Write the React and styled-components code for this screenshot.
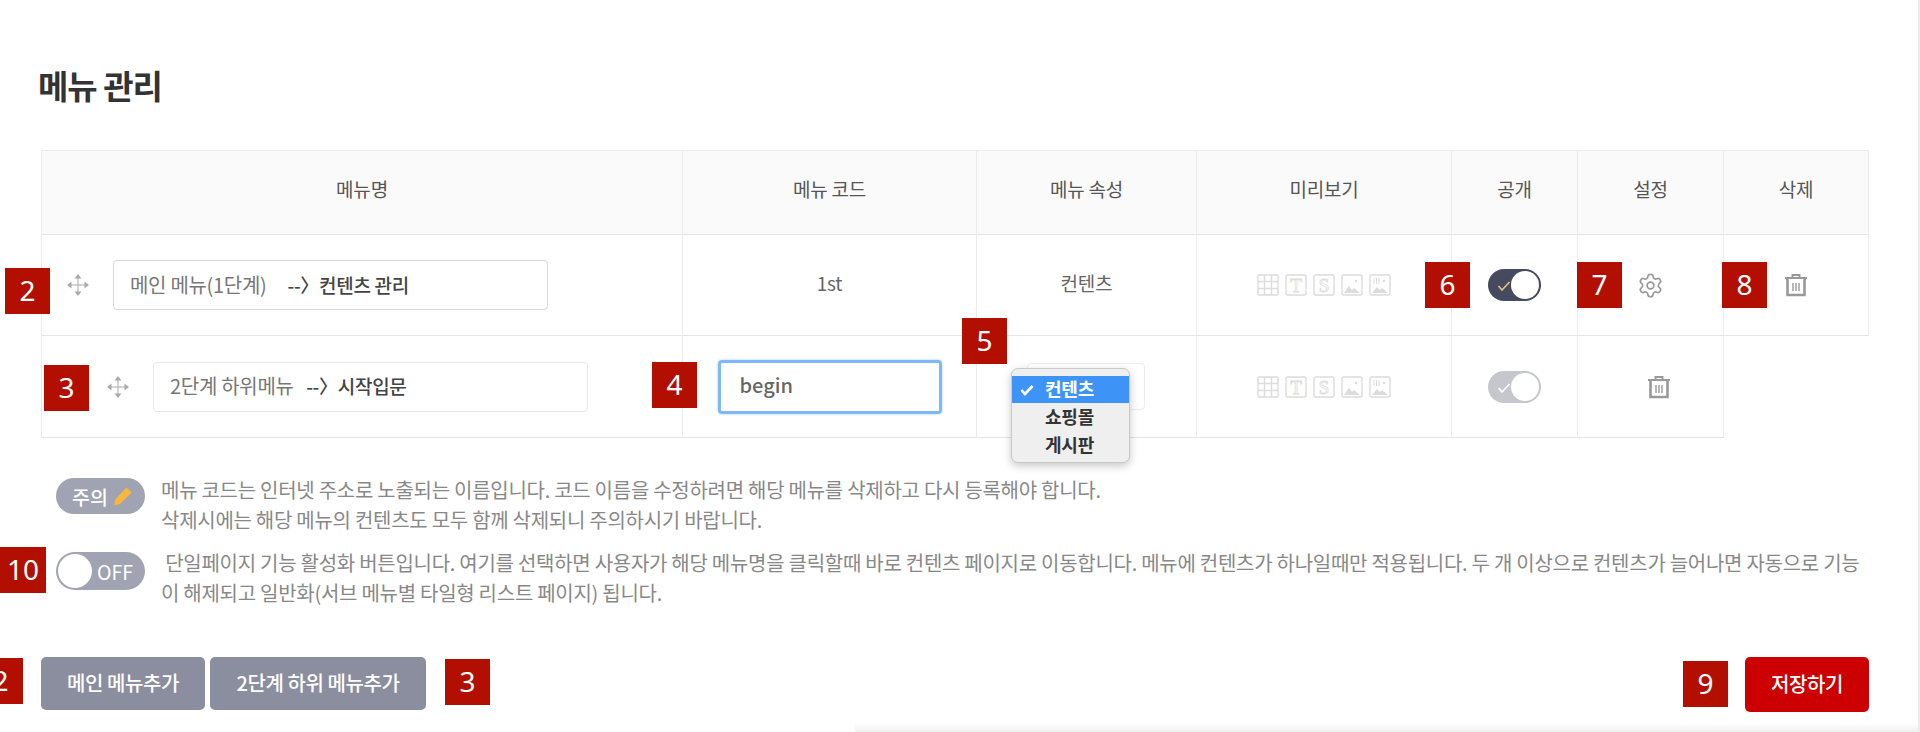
import React from 'react'
import styled, { createGlobalStyle } from 'styled-components'
import { Settings } from 'lucide-react'

const COLUMNS = '641px 294px 220px 255px 126px 146px 145px'

const GlobalStyle = createGlobalStyle`
html, body {
    margin: 0;
    padding: 0;
    overflow: hidden;
    background: #fff;
}
* { box-sizing: border-box; }
body {
    font-family: "Noto Sans CJK KR", "Noto Sans", sans-serif;
    color: #555;
}
`

const Page = styled.div`
position: relative;
width: 1920px;
height: 732px;
overflow: hidden;
padding: 0 49px 0 41px;
border-right: 2px solid #ececec;
`

const Title = styled.h1`
margin: 0 0 42px -3px;
padding-top: 62px;
font-size: 33px;
line-height: 46px;
font-weight: 700;
letter-spacing: -1px;
color: #333;
`

const Row = styled.div`
display: grid;
grid-template-columns: ${COLUMNS};
height: ${p => p.$h}px;
width: max-content;
border-left: 1px solid #ececec;
${p => p.$head && 'border-top: 1px solid #ececec;'}
`

const Cell = styled.div`
position: relative;
display: flex;
align-items: center;
justify-content: ${p => p.$start ? 'flex-start' : 'center'};
padding-left: ${p => p.$pl || 0}px;
padding-bottom: ${p => p.$head ? 8 : p.$text ? 5 : 0}px;
gap: 23px;
border-right: 1px solid #ececec;
border-bottom: 1px solid #e4e4e4;
font-size: 19px;
letter-spacing: -0.2px;
color: ${p => p.$head ? '#555' : '#666'};
background: ${p => p.$head ? '#fafafa' : '#fff'};
`

const Badge = styled.span`
position: absolute;
z-index: 3;
left: ${p => p.$x}px;
top: ${p => p.$y}px;
width: ${p => p.$w || 45}px;
height: 46px;
display: flex;
align-items: center;
justify-content: center;
padding-bottom: 3px;
background: #b30f00;
color: #fff;
font-family: "Noto Sans", sans-serif;
font-size: 28px;
letter-spacing: 0;
`

const NameField = styled.div`
width: 435px;
height: 50px;
display: flex;
align-items: center;
padding: 0 0 2px 16px;
background: #fff;
border: ${p => p.$light ? '1px solid #e8e8e8' : '1.5px solid #d8d8d8'};
border-radius: 4px;
font-size: 20px;
letter-spacing: -0.3px;
color: #777;
white-space: pre;
& b {
    font-weight: 500;
    color: #444;
    font-size: 19px;
}
`

const CodeInput = styled.div`
width: 224px;
height: 54px;
display: flex;
align-items: center;
padding: 0 0 4px 19px;
border: 3px solid #7db8f8;
border-radius: 4px;
box-shadow: 0 0 3px #a9d0fb;
font-size: 20px;
letter-spacing: 0;
font-weight: 500;
color: #666;
`

const SelectBox = styled.div`
width: 118px;
height: 47px;
margin-left: 50px;
border: 1px solid #ededed;
border-radius: 4px;
`

const SelectMenu = styled.ul`
position: absolute;
z-index: 2;
left: 34px;
top: 32px;
width: 119px;
height: 95px;
margin: 0;
padding: 7px 0 0;
list-style: none;
background: #efefef;
border: 1px solid #c9c9c9;
border-radius: 7px;
box-shadow: 0 3px 8px rgba(0, 0, 0, 0.22);
`

const SelectItem = styled.li`
position: relative;
height: ${p => p.$on ? 27 : 28}px;
display: flex;
align-items: center;
padding: 0 0 3px 33px;
font-size: 18px;
font-weight: 700;
color: ${p => p.$on ? '#fff' : '#333'};
background: ${p => p.$on ? '#3d94f6' : 'transparent'};
& svg {
    position: absolute;
    left: 8px;
    top: 7px;
}
`

const IconRow = styled.div`
display: flex;
gap: 6px;
`

const Track = styled.div`
position: relative;
width: 53px;
height: 32px;
border-radius: 16px;
background: ${p => p.$dim ? '#c5c7cc' : '#454a5e'};
& svg {
    position: absolute;
    left: 9px;
    top: 10px;
}
`

const Knob = styled.span`
position: absolute;
right: 2px;
top: 2px;
width: 28px;
height: 28px;
border-radius: 50%;
background: #fff;
`

const Note = styled.div`
position: relative;
display: flex;
gap: 16px;
margin-left: 15px;
margin-top: ${p => p.$mt}px;
`

const Pill = styled.div`
flex: none;
width: 89px;
height: ${p => p.$h}px;
margin-top: ${p => p.$mt}px;
display: flex;
align-items: center;
gap: 5px;
padding-left: ${p => p.$pl}px;
border-radius: 19px;
background: #a0a3b1;
color: #fff;
font-size: 19.5px;
font-weight: ${p => p.$weight || 500};
`

const OffKnob = styled.span`
flex: none;
width: 34px;
height: 34px;
border-radius: 50%;
background: #fff;
`

const NoteText = styled.p`
margin: 0;
font-size: 20px;
line-height: 30px;
letter-spacing: -0.27px;
color: #888;
white-space: pre;
`

const Footer = styled.div`
position: relative;
display: flex;
justify-content: space-between;
align-items: flex-start;
margin-top: 49px;
`

const ButtonGroup = styled.div`
display: flex;
gap: 5px;
`

const Button = styled.button`
width: ${p => p.$w}px;
height: ${p => p.$save ? 55 : 53}px;
padding: 0 0 3px;
border: 0;
border-radius: 5px;
font-family: inherit;
font-size: 20px;
font-weight: 500;
letter-spacing: -0.4px;
color: #fff;
background: ${p => p.$save ? '#cc0000' : '#8b8e9e'};
`

const BottomShade = styled.div`
position: absolute;
left: 855px;
right: 0;
bottom: 0;
height: 9px;
background: linear-gradient(to bottom, rgba(240, 240, 240, 0), #f0f0f0);
`

function MoveIcon() {
    return (
        <svg width="24" height="24" viewBox="0 0 24 24" fill="#aaa" stroke="none">
            <rect x="11.5" y="3" width="1" height="18" />
            <rect x="3" y="11.5" width="18" height="1" />
            <path d="M12 1l3.5 4.5h-7zM12 23l-3.5-4.5h7zM1 12l4.5-3.5v7zM23 12l-4.5 3.5v-7z" />
        </svg>
    )
}

function TrashIcon() {
    return (
        <svg width="24" height="24" viewBox="0 0 24 24" fill="none" stroke="#999" strokeWidth="2">
            <path d="M1 5h22M8.5 5V2h7v3" />
            <path d="M3.5 5v17h17V5" strokeWidth="2.6" />
            <path d="M9 10v8M12 10v8M15 10v8" strokeWidth="1.4" />
        </svg>
    )
}

function CheckMark({ color, weight = 1.6 }) {
    return (
        <svg width="14" height="14" viewBox="0 0 14 14" fill="none" stroke={color} strokeWidth={weight}>
            <path d="M1.5 7l3.5 4 7.5-8" />
        </svg>
    )
}

function PencilIcon() {
    return (
        <svg width="20" height="20" viewBox="0 0 20 20" fill="#f6b73c">
            <path d="M13.5 1.5l5 5L7 18l-6 1.5L2.5 13z" />
        </svg>
    )
}

const STROKE = '#dcdcdc'

function PreviewIcons() {
    const frame = <rect x="1" y="1" width="20" height="20" rx="1.5" fill="none" stroke={STROKE} strokeWidth="1.4" />
    const letter = (ch) => (
        <text x="11" y="17.5" textAnchor="middle" fontFamily="Liberation Serif, serif" fontSize="19" fill="none" stroke={STROKE} strokeWidth="0.8">{ch}</text>
    )
    return (
        <IconRow>
            <svg width="22" height="22" viewBox="0 0 22 22" fill="none" stroke={STROKE} strokeWidth="1.4">
                <rect x="1" y="1" width="20" height="20" rx="1" />
                <path d="M7.5 1v20M14.5 1v20M1 7.5h20M1 14.5h20" />
            </svg>
            <svg width="22" height="22" viewBox="0 0 22 22">{frame}{letter('T')}</svg>
            <svg width="22" height="22" viewBox="0 0 22 22">{frame}{letter('S')}</svg>
            <svg width="22" height="22" viewBox="0 0 22 22">
                {frame}
                <circle cx="15" cy="7" r="1.2" fill={STROKE} />
                <path d="M3 19l5-7 3 4 2-2 6 5z" fill={STROKE} />
            </svg>
            <svg width="22" height="22" viewBox="0 0 22 22">
                {frame}
                <path d="M5 4v6M7.5 4v6M10 4v6" stroke={STROKE} />
                <circle cx="15" cy="7" r="1.2" fill={STROKE} />
                <path d="M3 19l5-6 3 3 2-2 6 5z" fill={STROKE} />
            </svg>
        </IconRow>
    )
}

function Toggle({ dim }) {
    return (
        <Track $dim={dim}>
            <CheckMark color={dim ? '#fff' : '#e8c27a'} />
            <Knob />
        </Track>
    )
}

export default function App() {
    return (
        <Page>
            <GlobalStyle />
            <Title>메뉴 관리</Title>

            <Row $head $h={85}>
                {['메뉴명', '메뉴 코드', '메뉴 속성', '미리보기', '공개', '설정', '삭제'].map(label => (
                    <Cell $head key={label}>{label}</Cell>
                ))}
            </Row>

            <Row $h={101}>
                <Cell $start $pl={24}>
                    <Badge $x={-37} $y={33}>2</Badge>
                    <MoveIcon />
                    <NameField>메인 메뉴(1단계)     <b>--〉컨텐츠 관리</b></NameField>
                </Cell>
                <Cell $text>1st</Cell>
                <Cell $text>컨텐츠</Cell>
                <Cell><PreviewIcons /></Cell>
                <Cell>
                    <Badge $x={-27} $y={27}>6</Badge>
                    <Toggle />
                </Cell>
                <Cell>
                    <Badge $x={-1} $y={27}>7</Badge>
                    <Settings size={27} color="#999" strokeWidth={1.5} />
                </Cell>
                <Cell>
                    <Badge $x={-2} $y={27}>8</Badge>
                    <TrashIcon />
                </Cell>
            </Row>

            <Row $h={102}>
                <Cell $start $pl={64}>
                    <Badge $x={2} $y={29}>3</Badge>
                    <MoveIcon />
                    <NameField $light>2단계 하위메뉴   <b>--〉시작입문</b></NameField>
                </Cell>
                <Cell>
                    <Badge $x={-31} $y={26}>4</Badge>
                    <CodeInput>begin</CodeInput>
                </Cell>
                <Cell $start>
                    <Badge $x={-15} $y={-18}>5</Badge>
                    <SelectBox />
                    <SelectMenu>
                        <SelectItem $on><CheckMark color="#fff" weight={2.6} />컨텐츠</SelectItem>
                        <SelectItem>쇼핑몰</SelectItem>
                        <SelectItem>게시판</SelectItem>
                    </SelectMenu>
                </Cell>
                <Cell><PreviewIcons /></Cell>
                <Cell><Toggle dim /></Cell>
                <Cell $start $pl={69}><TrashIcon /></Cell>
            </Row>

            <Note $mt={37}>
                <Pill $h={36} $mt={3} $pl={16}>주의<PencilIcon /></Pill>
                <NoteText>
                    메뉴 코드는 인터넷 주소로 노출되는 이름입니다. 코드 이름을 수정하려면 해당 메뉴를 삭제하고 다시 등록해야 합니다.{'\n'}
                    삭제시에는 해당 메뉴의 컨텐츠도 모두 함께 삭제되니 주의하시기 바랍니다.
                </NoteText>
            </Note>

            <Note $mt={13}>
                <Badge $x={-56} $y={-1} $w={46}>10</Badge>
                <Pill $h={38} $mt={4} $pl={2} $weight={400}><OffKnob />OFF</Pill>
                <NoteText>
                    {' '}단일페이지 기능 활성화 버튼입니다. 여기를 선택하면 사용자가 해당 메뉴명을 클릭할때 바로 컨텐츠 페이지로 이동합니다. 메뉴에 컨텐츠가 하나일때만 적용됩니다. 두 개 이상으로 컨텐츠가 늘어나면 자동으로 기능{'\n'}
                    이 해제되고 일반화(서브 메뉴별 타일형 리스트 페이지) 됩니다.
                </NoteText>
            </Note>

            <Footer>
                <Badge $x={-63} $y={1}>2</Badge>
                <ButtonGroup>
                    <Button $w={164}>메인 메뉴추가</Button>
                    <Button $w={216}>2단계 하위 메뉴추가</Button>
                </ButtonGroup>
                <Badge $x={404} $y={2}>3</Badge>
                <Badge $x={1642} $y={4}>9</Badge>
                <Button $save $w={124}>저장하기</Button>
            </Footer>

            <BottomShade />
        </Page>
    )
}
